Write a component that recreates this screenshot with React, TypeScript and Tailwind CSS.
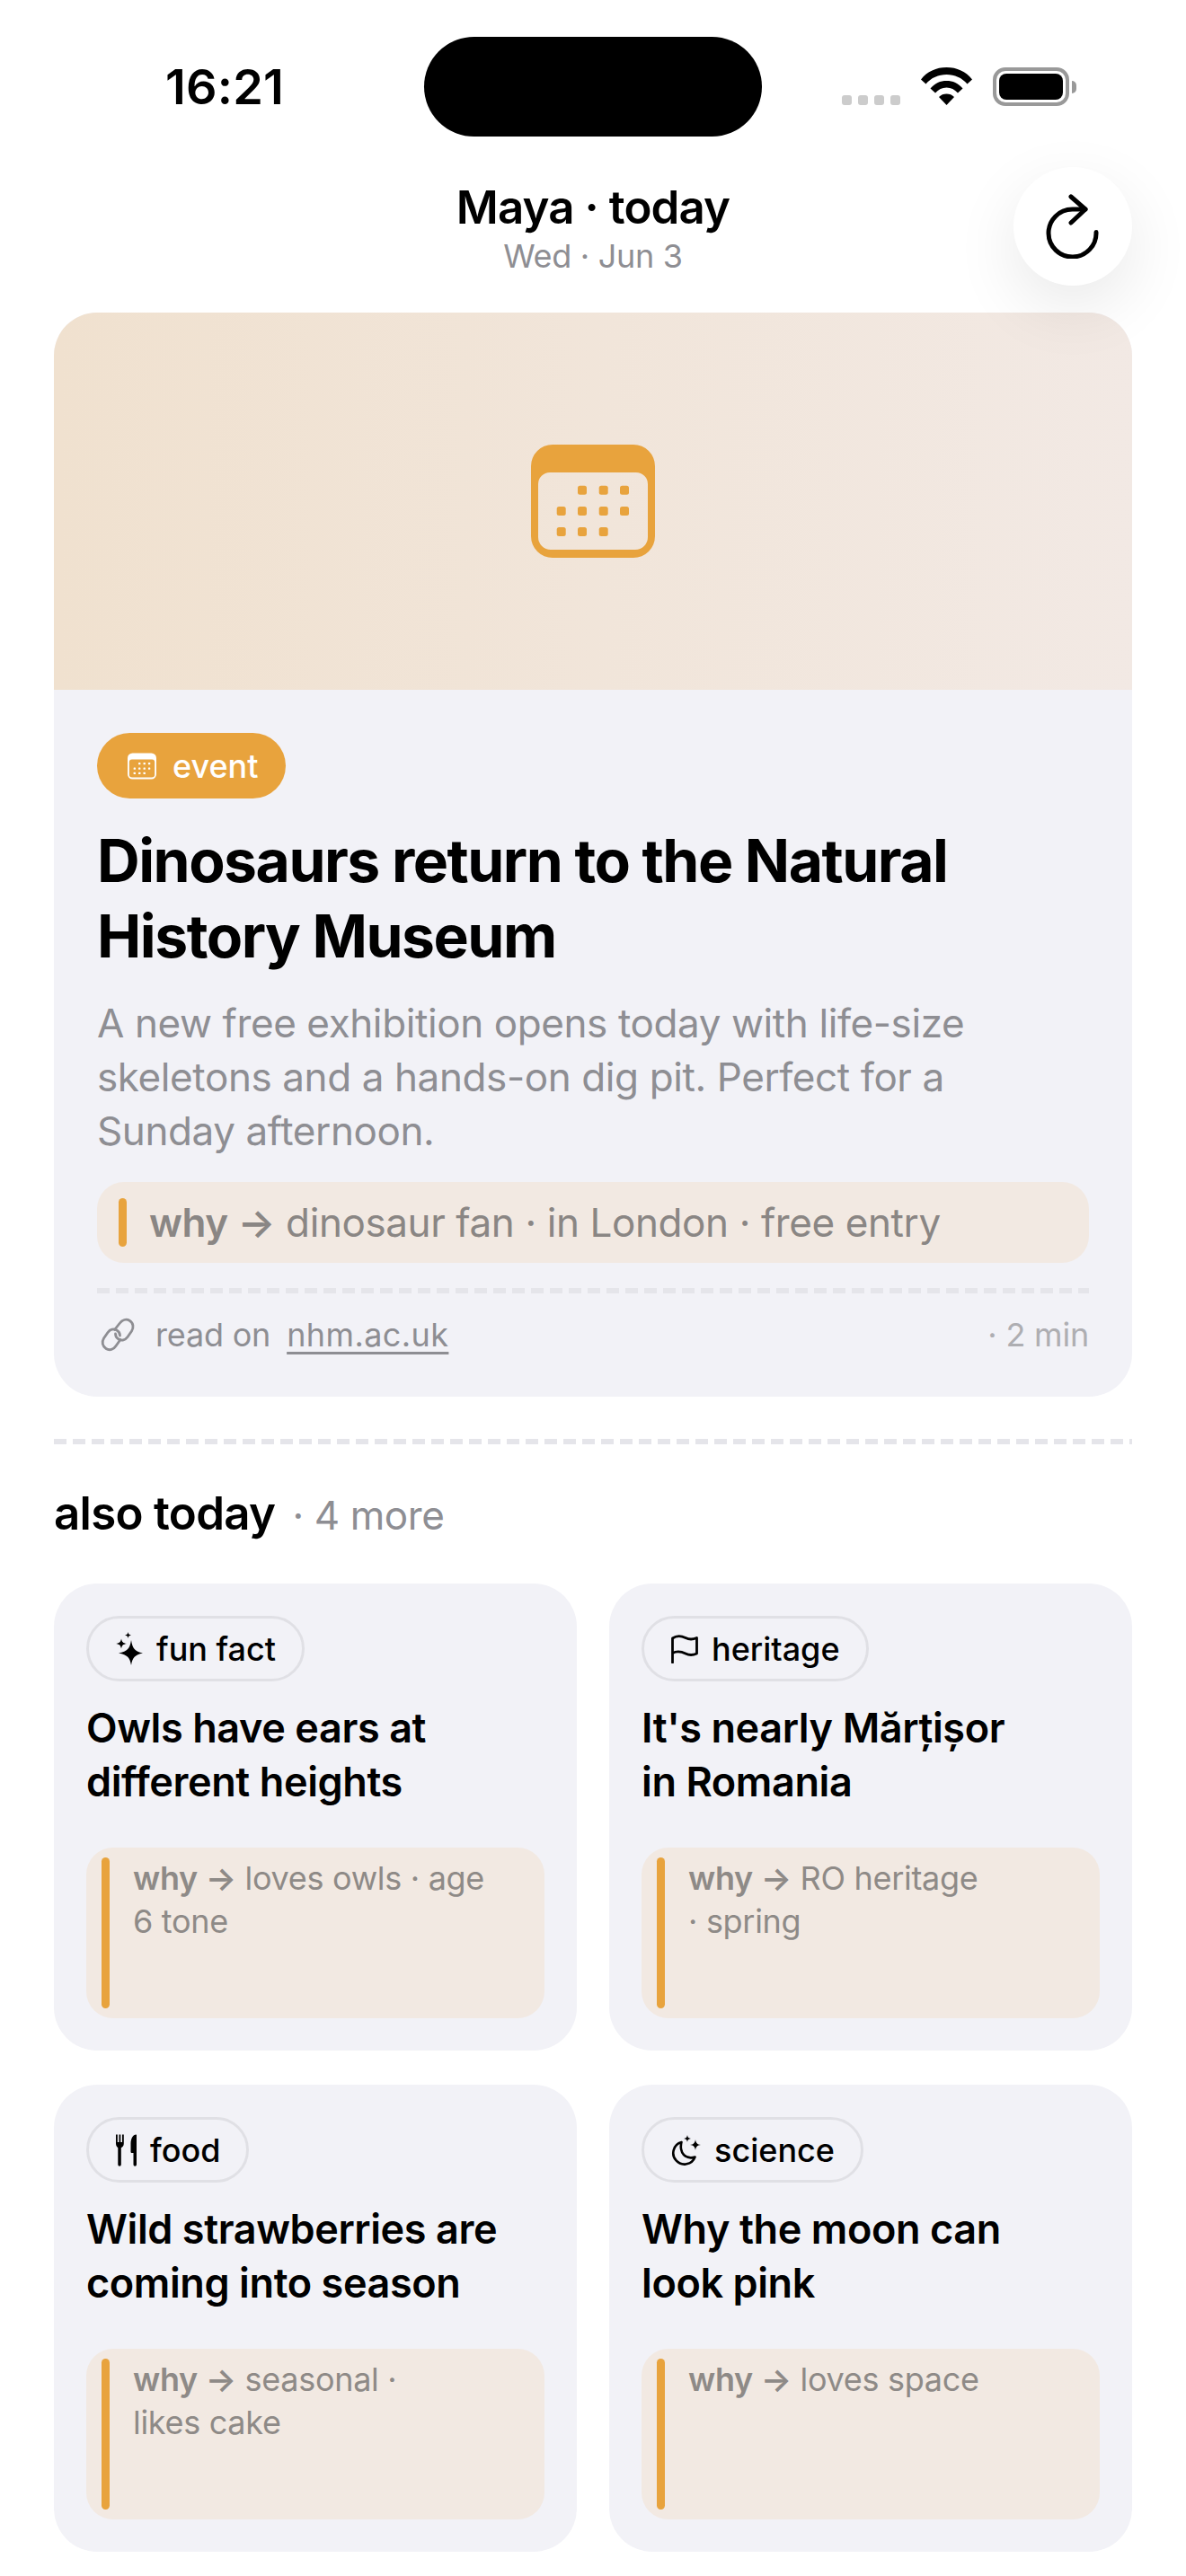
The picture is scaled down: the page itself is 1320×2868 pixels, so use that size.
import type { ReactNode } from "react";

const font = { fontFamily: "Inter, 'Noto Sans', sans-serif" };

function CalendarIcon({ className }: { className?: string }) {
    const dots = [
        [57, 50.7], [80.7, 50.7], [104, 50.7],
        [33.7, 74], [57, 74], [80.7, 74], [104, 74],
        [33.7, 97], [57, 97], [80.7, 97],
    ];
    return (
        <svg viewBox="0 0 138 126" className={className} fill="currentColor">
            <path
                fillRule="evenodd"
                d="M24 0h90a24 24 0 0 1 24 24v78a24 24 0 0 1-24 24H24A24 24 0 0 1 0 102V24A24 24 0 0 1 24 0ZM21 31a13 13 0 0 0-13 13v59a14 14 0 0 0 14 14h94a14 14 0 0 0 14-14V44a13 13 0 0 0-13-13Z"
            />
            {dots.map(([x, y]) => (
                <rect key={`${x}-${y}`} x={x - 5} y={y - 5} width="10" height="10" rx="2.5" />
            ))}
        </svg>
    );
}

function Wifi() {
    return (
        <svg viewBox="0 0 57 42" className="w-[57px] h-[42px]" fill="black">
            <path d="M28.5 0C40 0 50 4.500 57 13.500L51.500 18.500C45.500 11.500 37.500 8 28.500 8S11.500 11.500 5.500 18.500L0 13.500C7 4.500 17 0 28.500 0Z" />
            <path d="M28.500 15C35.500 15 41.500 17.500 46.500 23.500L41 28.500C37.500 24.500 33.500 22.500 28.500 22.500S19.500 24.500 16 28.500L10.500 23.500C15.500 17.500 21.500 15 28.500 15Z" />
            <path d="M28.500 29.500C32 29.500 34.500 30.500 37 33L28.500 42L20 33C22.500 30.500 25 29.500 28.500 29.500Z" />
        </svg>
    );
}

function RefreshIcon() {
    return (
        <svg viewBox="0 0 60 72" className="w-[60px] h-[72px]" fill="none" stroke="black" strokeWidth="5" strokeLinecap="round" strokeLinejoin="round">
            <path d="M56 42.500A26.500 26.500 0 1 1 29.500 17H44" />
            <path d="M28 3L44 17L28 32" />
        </svg>
    );
}

function Sparkles() {
    return (
        <svg viewBox="0 0 30 37" className="w-[30px] h-[37px]" fill="black">
            <path d="M17 9C18.500 18.500 21 21.500 30 23.500C21 25.500 18.500 28.500 17 37C15.500 28.500 13 25.500 3 23.500C13 21.500 15.500 18.500 17 9Z" />
            <path d="M6 7.500C6.800 11.300 7.800 12.200 12 13C7.800 13.800 6.800 14.700 6 18.500C5.200 14.700 4.200 13.800 0 13C4.200 12.200 5.200 11.300 6 7.500Z" />
            <path d="M13.500 0C14 2.500 14.500 3 17 3.500C14.500 4 14 4.500 13.500 7C13 4.500 12.500 4 10 3.500C12.500 3 13 2.500 13.500 0Z" />
        </svg>
    );
}

function FlagIcon() {
    return (
        <svg viewBox="0 0 30 32" className="w-[30px] h-[32px]" fill="none" stroke="black" strokeWidth="2.800" strokeLinecap="round" strokeLinejoin="round">
            <path d="M1.500 31V4C7 0 12 1.500 16 3.500C20 5.500 24 5.500 28.500 3.500V21C24 23 20 23 16 21C12 19 7 17.500 1.500 20.500" />
        </svg>
    );
}

function ForkKnife() {
    return (
        <svg viewBox="0 0 23 36" className="w-[23px] h-[36px]" fill="black">
            <path d="M0 0.500h1.800V9h1.700V0.500h1.800V9H7V0.500h1.800v10c0 2.500-1.300 4-3 4.800V34a1.500 1.500 0 0 1-3.500 0V15.300C1.300 14.500 0 13 0 10.500Z" />
            <path d="M22.500 0.500c.300 0 .500.200.500.500V34a1.700 1.700 0 0 1-3.500 0V21h-1.500c-1 0-1.500-.500-1.500-1.500V11C16.500 5 19 0.500 22.500 0.500Z" />
        </svg>
    );
}

function MoonStars() {
    return (
        <svg viewBox="0 0 33 34" className="w-[33px] h-[34px]">
            <path d="M11.500 8A12.500 12.500 0 1 0 26.500 24.500C22 26 17 25 14 22C11 19 10 13 11.500 8Z" fill="none" stroke="black" strokeWidth="2.600" strokeLinejoin="round" />
            <path d="M18 0C18.500 3 19.500 3.500 22 4C19.500 4.500 18.500 5 18 8C17.500 5 16.500 4.500 14 4C16.500 3.500 17.500 3 18 0Z" fill="black" />
            <path d="M27 5C27.600 9 29 10.500 33 11C29 11.500 27.600 13 27 17C26.400 13 25 11.500 21 11C25 10.500 26.400 9 27 5Z" fill="black" />
        </svg>
    );
}

function LinkIcon() {
    return (
        <svg viewBox="0 0 38 38" className="w-[38px] h-[38px]" fill="none" stroke="#8e8e93" strokeWidth="2.800" strokeLinecap="round">
            <path d="M15.500 13.500L21 6.500C24 2.500 28.500 1 32.500 3.500C36.500 6 37 11 34.500 15L30 21.500C27.500 25 23.500 26 20 24C17.500 22.500 16.500 20.500 16.500 18" />
            <path d="M22 24.500L17 31.500C14.500 35.500 10 37 6 34.500C2 32 1 27 3.500 23L8 16.500C10.500 13 14.500 12 18 14C20.500 15.500 21.500 17.500 21.500 20" />
        </svg>
    );
}

function Chip({ icon, label }: { icon: ReactNode; label: string }) {
    return (
        <div className="self-start flex items-center gap-[15px] h-[73px] pl-[30px] pr-[29px] rounded-full border-[3px] border-[#e0e0e5] text-[36px] font-medium text-black">
            {icon}
            <span>{label}</span>
        </div>
    );
}

function SmallCard({ icon, label, title, why }: { icon: ReactNode; label: string; title: ReactNode; why: ReactNode }) {
    return (
        <div className="flex flex-col h-[520px] rounded-[48px] bg-[#f2f2f7] p-[36px]">
            <Chip icon={icon} label={label} />
            <h3 className="mt-[22px] text-[45px] leading-[60px] font-semibold tracking-[-0.4px] text-black">{title}</h3>
            <div className="mt-auto flex gap-[26px] h-[190px] rounded-[30px] bg-[#f2e9e2] py-[11px] pl-[17px] pr-[20px]">
                <div className="w-[9px] shrink-0 rounded-full bg-[#e8a33d]" />
                <p className="text-[36px] leading-[48px] tracking-[-0.3px] text-[#8e8a87] -mt-[1px]">{why}</p>
            </div>
        </div>
    );
}

const dashes = "h-[6px] bg-[repeating-linear-gradient(90deg,#e5e5ea_0,#e5e5ea_14px,transparent_14px,transparent_21px)]";

export default function App() {
    return (
        <div className="w-[1320px] h-[2868px] overflow-hidden bg-white" style={font}>
            <div className="grid grid-cols-[1fr_376px_1fr] pt-[41px]">
                <div className="pl-[184px] pt-[29px] text-[54px] leading-[54px] font-semibold tracking-[0.2px] text-black">16:21</div>
                <div className="h-[111px] rounded-full bg-black" />
                <div className="flex items-start justify-end gap-[23px] pr-[122px] pt-[34px]">
                    <div className="flex gap-[7px] mt-[31px]">
                        <div className="w-[11px] h-[11px] rounded-[3px] bg-[#cccccc]" />
                        <div className="w-[11px] h-[11px] rounded-[3px] bg-[#cccccc]" />
                        <div className="w-[11px] h-[11px] rounded-[3px] bg-[#cccccc]" />
                        <div className="w-[11px] h-[11px] rounded-[3px] bg-[#cccccc]" />
                    </div>
                    <Wifi />
                    <div className="flex items-center gap-[3px]">
                        <div className="w-[85px] h-[43px] rounded-[14px] border-[4px] border-[#999999] p-[3px]">
                            <div className="w-full h-full rounded-[8px] bg-black" />
                        </div>
                        <div className="w-[5px] h-[14px] rounded-r-full bg-[#999999]" />
                    </div>
                </div>
            </div>

            <header className="relative h-[196px] pt-[48px] text-center">
                <h1 className="text-[51px] leading-[62px] font-semibold tracking-[-0.9px] text-black">Maya · today</h1>
                <p className="text-[36px] leading-[46px] tracking-[-0.3px] text-[#8e8e93]">Wed · Jun 3</p>
                <button className="absolute right-[60px] top-[34px] flex items-center justify-center w-[132px] h-[132px] rounded-full bg-white shadow-[0_24px_72px_rgba(0,0,0,0.09)]">
                    <RefreshIcon />
                </button>
            </header>

            <main className="px-[60px]">
                <section className="rounded-[48px] bg-[#f2f2f7] overflow-hidden h-[1207px]">
                    <div className="flex items-center justify-center h-[420px] bg-gradient-to-r from-[#f0e1cf] to-[#f2e9e4] text-[#e8a33d]">
                        <CalendarIcon className="w-[138px] h-[126px]" />
                    </div>
                    <div className="px-[48px] pt-[48px]">
                        <div className="inline-flex items-center gap-[18px] h-[73px] pl-[34px] pr-[30px] rounded-full bg-[#e8a33d] text-white text-[36px] font-medium">
                            <CalendarIcon className="w-[32px] h-[30px]" />
                            <span>event</span>
                        </div>
                        <h2 className="mt-[27px] text-[66px] leading-[84px] font-bold tracking-[-1.5px] text-black">
                            Dinosaurs return to the Natural<br />History Museum
                        </h2>
                        <p className="mt-[25px] text-[44px] leading-[60px] tracking-[-0.4px] text-[#8e8e93]">
                            A new free exhibition opens today with life-size<br />skeletons and a hands-on dig pit. Perfect for a<br />Sunday afternoon.
                        </p>
                        <div className="mt-[27px] flex items-center gap-[25px] h-[90px] rounded-[30px] bg-[#f2e9e2] pl-[24px] text-[44px] tracking-[-0.4px] text-[#8a8684]">
                            <div className="w-[9px] h-[54px] rounded-full bg-[#e8a33d]" />
                            <p><span className="font-semibold">why →</span> dinosaur fan · in London · free entry</p>
                        </div>
                        <div className={`mt-[28px] ${dashes}`} />
                        <div className="mt-[24px] flex items-center text-[36px] leading-[44px] tracking-[-0.2px] text-[#8e8e93]">
                            <div className="ml-[4px] mr-[23px]"><LinkIcon /></div>
                            <span>read on</span>
                            <span className="ml-[18px] tracking-[0.4px] underline decoration-[length:3px] underline-offset-[6px]">nhm.ac.uk</span>
                            <span className="ml-auto text-[#aeaeb2]">· 2 min</span>
                        </div>
                    </div>
                </section>

                <div className={`mt-[47px] ${dashes}`} />

                <div className="mt-[46px] flex items-baseline gap-[19px]">
                    <h2 className="text-[51px] leading-[62px] font-semibold tracking-[-0.7px] text-black">also today</h2>
                    <span className="text-[44px] tracking-[-0.4px] text-[#8e8e93]">· 4 more</span>
                </div>

                <div className="mt-[43px] grid grid-cols-2 gap-x-[36px] gap-y-[38px]">
                    <SmallCard
                        icon={<Sparkles />}
                        label="fun fact"
                        title={<>Owls have ears at<br />different heights</>}
                        why={<><span className="font-semibold">why →</span> loves owls · age<br />6 tone</>}
                    />
                    <SmallCard
                        icon={<FlagIcon />}
                        label="heritage"
                        title={<>It's nearly Mărțișor<br />in Romania</>}
                        why={<><span className="font-semibold">why →</span> RO heritage<br />· spring</>}
                    />
                    <SmallCard
                        icon={<ForkKnife />}
                        label="food"
                        title={<>Wild strawberries are<br />coming into season</>}
                        why={<><span className="font-semibold">why →</span> seasonal ·<br />likes cake</>}
                    />
                    <SmallCard
                        icon={<MoonStars />}
                        label="science"
                        title={<>Why the moon can<br />look pink</>}
                        why={<><span className="font-semibold">why →</span> loves space</>}
                    />
                </div>
            </main>
        </div>
    );
}
